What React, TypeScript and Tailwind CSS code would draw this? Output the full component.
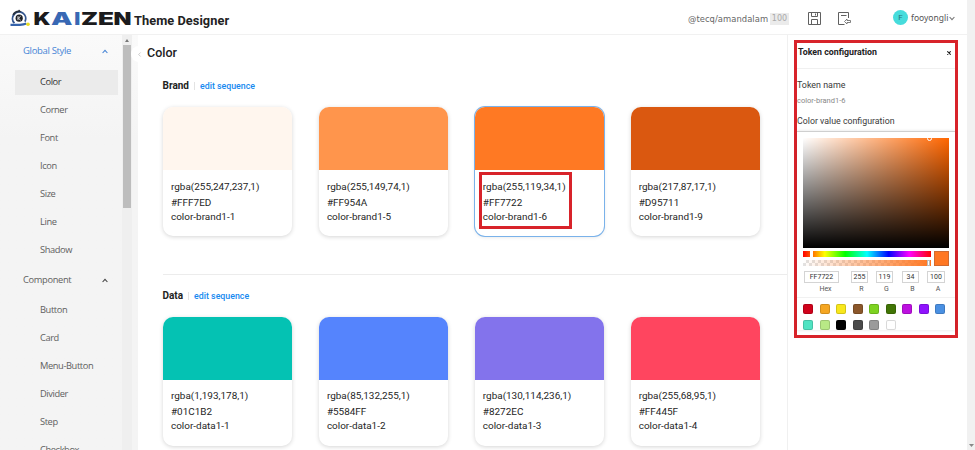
import React from "react";
import { ChevronLeft } from "lucide-react";

type Token = { rgba: string; hex: string; name: string; swatch: string; selected?: boolean };

const brand: Token[] = [
  { rgba: "rgba(255,247,237,1)", hex: "#FFF7ED", name: "color-brand1-1", swatch: "bg-[#fff6ee]" },
  { rgba: "rgba(255,149,74,1)", hex: "#FF954A", name: "color-brand1-5", swatch: "bg-[#ff954c]" },
  { rgba: "rgba(255,119,34,1)", hex: "#FF7722", name: "color-brand1-6", swatch: "bg-[#ff7923]", selected: true },
  { rgba: "rgba(217,87,17,1)", hex: "#D95711", name: "color-brand1-9", swatch: "bg-[#da5810]" },
];

const data: Token[] = [
  { rgba: "rgba(1,193,178,1)", hex: "#01C1B2", name: "color-data1-1", swatch: "bg-[#04c2b3]" },
  { rgba: "rgba(85,132,255,1)", hex: "#5584FF", name: "color-data1-2", swatch: "bg-[#5584fd]" },
  { rgba: "rgba(130,114,236,1)", hex: "#8272EC", name: "color-data1-3", swatch: "bg-[#8373ec]" },
  { rgba: "rgba(255,68,95,1)", hex: "#FF445F", name: "color-data1-4", swatch: "bg-[#ff455f]" },
];

const globals = ["Color", "Corner", "Font", "Icon", "Size", "Line", "Shadow"];
const components = ["Button", "Card", "Menu-Button", "Divider", "Step", "Checkbox"];

const presets = [
  "bg-[#d0021b]", "bg-[#f5a623]", "bg-[#f8e71c]", "bg-[#8b572a]", "bg-[#7ed321]",
  "bg-[#417505]", "bg-[#bd10e0]", "bg-[#9013fe]", "bg-[#4a90e2]", "bg-[#50e3c2]",
  "bg-[#b8e986]", "bg-[#000000]", "bg-[#4a4a4a]", "bg-[#9b9b9b]", "bg-[#ffffff]",
];

const fields = [
  { label: "Hex", value: "FF7722", box: "w-[35px]", mr: "mr-[12px]", shift: "pl-2" },
  { label: "R", value: "255", box: "w-[17px]", mr: "mr-[8px]", shift: "pl-1" },
  { label: "G", value: "119", box: "w-[17px]", mr: "mr-[9px]", shift: "pl-1" },
  { label: "B", value: "34", box: "w-[17px]", mr: "mr-[8px]", shift: "pl-1" },
  { label: "A", value: "100", box: "w-[18px]", mr: "", shift: "pl-1" },
];

function Caret({ className }: { className: string }) {
  return (
    <svg className={className} width="6" height="5" viewBox="0 0 6 5" fill="none" stroke="currentColor" strokeWidth="1.1">
      <path d="M0.6 4 L3 1.4 L5.4 4" />
    </svg>
  );
}

function Logo() {
  return (
    <svg width="122" height="20" viewBox="0 0 122 20" className="mt-[4px] shrink-0">
      <path d="M4.4 14.2 A6.6 6.6 0 1 1 15 12.6" fill="none" stroke="#34568f" strokeWidth="1.9" />
      <path d="M3.2 6 A6.6 6.6 0 0 1 9.6 2.4" fill="none" stroke="#27303d" strokeWidth="1.9" />
      <path d="M0.5 15.8 H10 C12.5 15.8 14.5 15.4 16.4 14.6" fill="none" stroke="#3563ab" strokeWidth="2.2" />
      <path d="M9 0.6 L11.4 3 H7.5 Z" fill="#27303d" />
      <circle cx="9.2" cy="9.2" r="3.6" fill="#1c1f26" />
      <path d="M8 7.2 V11.2 M10.6 7.2 L8.5 9.2 L10.6 11.2" stroke="#fff" strokeWidth="0.9" fill="none" />
      <circle cx="18" cy="15.2" r="1.8" fill="#e8dc1e" />
      <g fontFamily="Inter, 'Liberation Sans', sans-serif" fontWeight="900" fontSize="16.8" fill="#1b1b1d">
        <text x="23.5" y="16.2" textLength="17" lengthAdjust="spacingAndGlyphs">K</text>
        <text x="64.3" y="16.2" textLength="6" lengthAdjust="spacingAndGlyphs" fill="#3868b4">I</text>
        <text x="71" y="16.2" textLength="17" lengthAdjust="spacingAndGlyphs">Z</text>
        <text x="88" y="16.2" textLength="16" lengthAdjust="spacingAndGlyphs">E</text>
        <text x="103.5" y="16.2" textLength="18" lengthAdjust="spacingAndGlyphs">N</text>
        <text x="41" y="16.2" textLength="21.5" lengthAdjust="spacingAndGlyphs" fill="#3868b4">A</text>
      </g>
    </svg>
  );
}

function Header() {
  return (
    <header className="flex h-[35px] shrink-0 items-center border-b border-[#f1f1f1] pl-[10px]">
      <Logo />
      <h1 className="ml-[2px] w-[554px] shrink-0 pt-[7px] font-[Roboto,sans-serif] text-[12.8px] leading-4 font-bold tracking-[0.05px] text-[#222]">
        Theme Designer
      </h1>
      <span className="w-[82px] shrink-0 whitespace-nowrap pt-[4px] font-['DejaVu_Sans',sans-serif] text-[8.4px] tracking-[0.05px] text-[#666]">
        @tecq/amandalam
      </span>
      <span className="mt-[3px] flex h-[12px] w-[19px] shrink-0 items-center justify-center bg-[#ebebeb] font-['DejaVu_Sans',sans-serif] text-[8px] text-[#aaa]">
        100
      </span>
      <svg className="ml-[19px] mt-[2px] shrink-0" width="13" height="13" viewBox="0 0 13 13" fill="none" stroke="#606060" strokeWidth="1">
        <path d="M0.5 0.5 H12.5 V12.5 H0.5 Z M3.5 0.5 V4.5 H9.5 V0.5 M7.5 1.5 V3.5 M3.5 12.5 V7.5 H9.5 V12.5" />
      </svg>
      <svg className="ml-[17px] mt-[2px] shrink-0" width="13" height="13" viewBox="0 0 13 13" fill="none" stroke="#606060" strokeWidth="1">
        <path d="M10.5 6 V0.5 H0.5 V12.5 H6.5 M3 3.5 H8.5" />
        <path d="M6.5 9.5 L9 7 V8.5 H12.5 V10.5 H9 V12 Z" strokeWidth="0.8" />
      </svg>
      <span className="ml-[42px] mt-px flex size-[15px] shrink-0 items-center justify-center rounded-full bg-[#46dcdc] font-[Roboto,sans-serif] text-[8px] text-[#287478]">
        F
      </span>
      <span className="ml-[3px] w-[37px] shrink-0 whitespace-nowrap pt-[3px] font-['Noto_Sans',sans-serif] text-[8.5px] text-[#555]">
        fooyongli
      </span>
      <Caret className="mt-[2px] ml-px shrink-0 rotate-180 text-[#777]" />
    </header>
  );
}

function Sidebar() {
  return (
    <aside className="flex w-[138px] shrink-0 overflow-hidden bg-linear-to-b from-[#fafafa] to-[#f4f4f4] to-25% font-['Open_Sans','Noto_Sans',sans-serif] text-[9.3px] tracking-[-0.4px] text-[#606060]">
      <nav className="w-[122px] shrink-0">
        <div className="flex h-[33px] items-center justify-between pr-[14px] pl-[23px] text-[9.6px] tracking-[-0.5px] text-[#4785d6]">
          <span className="text-[9.5px] tracking-[-0.33px]">Global Style</span>
          <Caret className="" />
        </div>
        <ul>
          {globals.map((item, i) => (
            <li key={item} className="flex h-7 items-center pr-1 pl-[15px]">
              <span className={i === 0 ? "flex h-[25px] w-[103px] items-center bg-[#ebebeb] pl-[25px] text-[#333]" : "pl-[25px]"}>
                {item}
              </span>
            </li>
          ))}
        </ul>
        <div className="flex h-[32px] items-center justify-between pr-[14px] pl-[23px]">
          <span className="tracking-[-0.33px]">Component</span>
          <Caret className="text-[#444]" />
        </div>
        <ul>
          {components.map((item) => (
            <li key={item} className="flex h-7 items-center pl-10">{item}</li>
          ))}
        </ul>
      </nav>
      <div className="flex w-[10px] shrink-0 flex-col bg-[#efefef] pt-px">
        <span className="flex h-[9px] items-center justify-center text-[#777]">
          <svg width="4" height="3" viewBox="0 0 4 3" fill="currentColor"><path d="M0 3 L2 0 L4 3 Z" /></svg>
        </span>
        <span className="ml-px h-[163px] w-[8px] bg-[#bdbdbd]" />
      </div>
    </aside>
  );
}

function Card({ token, textTop }: { token: Token; textTop: string }) {
  return (
    <article
      className={
        token.selected
          ? "h-[129px] overflow-hidden rounded-[10px] bg-white shadow-[0_0_0_1px_#7ab2ea,0_1px_4px_rgba(0,0,0,0.12)]"
          : "h-[129px] overflow-hidden rounded-[10px] bg-white shadow-[0_1px_4px_rgba(0,0,0,0.17)]"
      }
    >
      <div className={"h-[63px] " + token.swatch} />
      <div className={"relative pl-2 text-[9.95px] text-[#252525] " + textTop}>
        {token.selected && <div className="absolute top-[2px] left-[4px] h-[57px] w-[93px] border-[3px] border-[#d8232a]" />}
        <p className="h-4 leading-[15px] whitespace-nowrap">{token.rgba}</p>
        <p className="h-[15px] leading-[15px]">{token.hex}</p>
        <p className="h-[15px] leading-[14px]">{token.name}</p>
      </div>
    </article>
  );
}

function Section({ title, tokens, textTop }: { title: string; tokens: Token[]; textTop: string }) {
  return (
    <section className="pl-[25px]">
      <div className="-ml-[0.5px] flex h-[12px] items-center text-[10px] leading-3">
        <h3 className="font-bold text-[#222]">{title}</h3>
        <span className="mx-[5px] h-2 w-px bg-[#e3e3e3]" />
        <a className="text-[8.8px] font-medium text-[#1689f0]">edit sequence</a>
      </div>
      <div className="mt-[15px] grid w-[597px] grid-cols-4 gap-x-[26.6px]">
        {tokens.map((t) => <Card key={t.name} token={t} textTop={textTop} />)}
      </div>
    </section>
  );
}

function Picker() {
  return (
    <div className="mx-auto w-[158px] border-t border-[#cfcfcf] bg-white px-[6px] pt-[6px] shadow-[0_0_3px_rgba(0,0,0,0.12)]">
      <div className="relative h-[110px] overflow-hidden bg-[#ff6600]">
        <div className="absolute inset-0 bg-linear-to-r from-white to-transparent" />
        <div className="absolute inset-0 bg-linear-to-b from-transparent to-black" />
        <span className="absolute -top-[2px] left-[124px] size-[5px] rounded-full border border-white" />
      </div>
      <div className="mt-[3px] flex justify-between">
        <div className="w-[128px]">
          <div className="relative h-[6px] bg-[linear-gradient(to_right,#f00_0%,#ff0_17%,#0f0_33%,#0ff_50%,#00f_67%,#f0f_83%,#f00_100%)]">
            <span className="absolute left-[7px] h-[6px] w-[3px] bg-white" />
          </div>
          <div className="relative mt-[3px] h-[6px] bg-[linear-gradient(to_right,transparent,#ff7722),repeating-conic-gradient(#e2e2e2_0_25%,#fff_0_50%)] bg-[length:100%_100%,6px_6px]">
            <span className="absolute right-[1px] h-[6px] w-[3px] border border-[#bbb] bg-white" />
          </div>
        </div>
        <span className="h-[15px] w-[15px] border border-[#d06a30] bg-[#ff7722]" />
      </div>
      <div className="mt-[5px] flex pl-px text-[7px] text-[#333]">
        {fields.map((f) => (
          <label key={f.label} className={"flex shrink-0 flex-col items-center " + f.box + " " + f.mr}>
            <span className="flex h-[12px] w-full items-center justify-center border border-[#d4d4d4] leading-none">{f.value}</span>
            <span className={"mt-[2px] leading-[9px] text-[#555] " + f.shift}>{f.label}</span>
          </label>
        ))}
      </div>
      <div className="-mx-[6px] mt-[3px] grid grid-cols-[repeat(9,10px)] gap-x-[6.5px] gap-y-[6px] border-t border-[#f1f1f1] pt-[6px] pl-[6px]">
        {presets.map((p) => (
          <span key={p} className={"size-[10px] rounded-[2px] shadow-[inset_0_0_0_1px_rgba(0,0,0,0.15)] " + p} />
        ))}
      </div>
    </div>
  );
}

function TokenPanel() {
  return (
    <aside className="w-[180px] shrink-0 border-l border-[#f0f0f0] pt-[5px] pl-[6px]">
      <div className="h-[298px] w-[164px] border-[3px] border-[#d8232a] text-[9px] text-[#3a3a3a]">
        <div className="flex h-[26px] items-center justify-between border-b border-[#f0f0f0] pr-[4px] pb-[5px] pl-px">
          <h2 className="text-[8.8px] font-bold text-[#222]">Token configuration</h2>
          <svg width="4" height="4" viewBox="0 0 4 4" stroke="#222" strokeWidth="1.1"><path d="M0.3 0.3 L3.7 3.7 M3.7 0.3 L0.3 3.7" /></svg>
        </div>
        <p className="mt-[10px] h-[12px] text-[8.9px] leading-[12px]">Token name</p>
        <p className="mt-[5px] h-[10px] text-[7.5px] leading-[10px] text-[#888]">color-brand1-6</p>
        <p className="mt-[9px] h-[12px] text-[8.8px] leading-[12px]">Color value configuration</p>
        <div className="h-[4px]" />
        <Picker />
      </div>
    </aside>
  );
}

export default function App() {
  return (
    <div className="flex h-[450px] w-[975px] overflow-hidden bg-white font-[Roboto,sans-serif]">
      <div className="flex w-[967px] shrink-0 flex-col">
        <Header />
        <div className="flex min-h-0 flex-1">
          <Sidebar />
          <main className="relative w-[649px] shrink-0">
            <span className="absolute top-[11px] -left-[7px] flex size-4 items-center justify-center rounded-full bg-white">
              <ChevronLeft size={7} color="#aaa" />
            </span>
            <h2 className="mt-[10px] ml-[9px] text-[12.5px] leading-4 font-medium text-[#222]">Color</h2>
            <div className="h-[19px]" />
            <Section title="Brand" tokens={brand} textTop="pt-[9px]" />
            <div className="mt-[38px] mb-[15px] ml-[25px] h-px bg-[#ececec]" />
            <Section title="Data" tokens={data} textTop="pt-[8px]" />
          </main>
          <TokenPanel />
        </div>
      </div>
      <div className="flex flex-1 items-end justify-center bg-[#f1f1f1] pb-[3px] text-[#888]">
        <svg width="5" height="3" viewBox="0 0 5 3" fill="currentColor"><path d="M0 0 H5 L2.5 3 Z" /></svg>
      </div>
    </div>
  );
}
